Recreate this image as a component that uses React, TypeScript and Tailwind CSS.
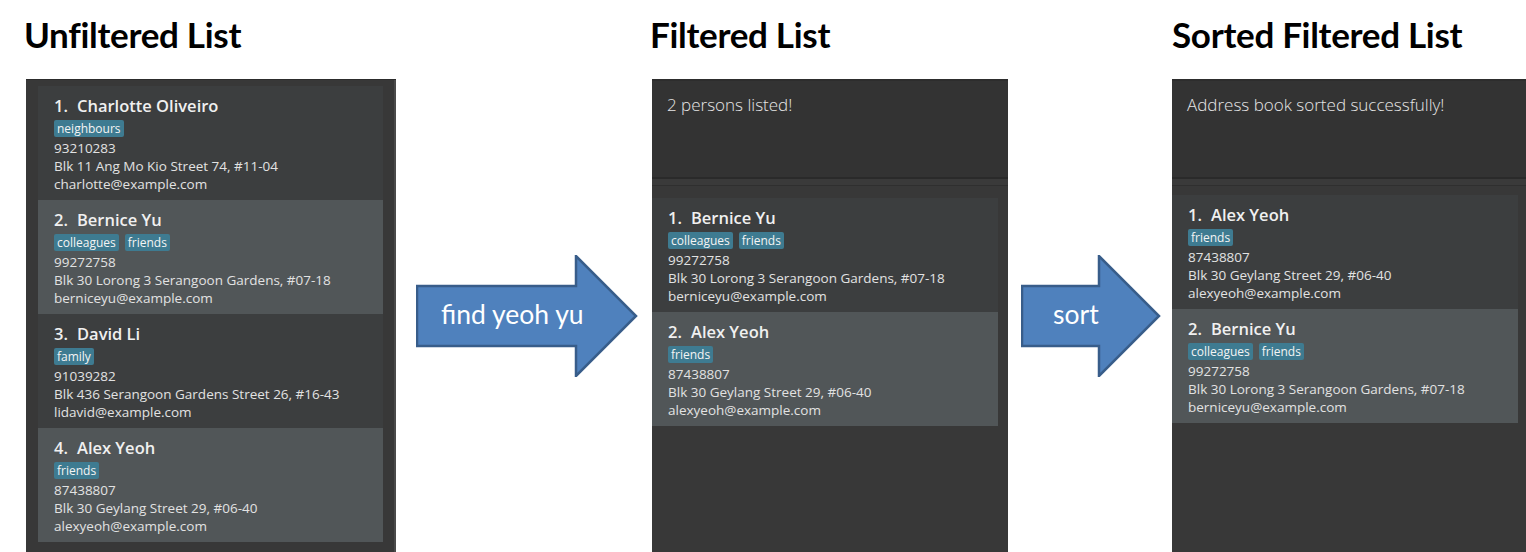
import React from "react";

type Person = {
  name: string;
  tags: string[];
  phone: string;
  address: string;
  email: string;
};

const charlotte: Person = {
  name: "Charlotte Oliveiro",
  tags: ["neighbours"],
  phone: "93210283",
  address: "Blk 11 Ang Mo Kio Street 74, #11-04",
  email: "charlotte@example.com",
};
const bernice: Person = {
  name: "Bernice Yu",
  tags: ["colleagues", "friends"],
  phone: "99272758",
  address: "Blk 30 Lorong 3 Serangoon Gardens, #07-18",
  email: "berniceyu@example.com",
};
const david: Person = {
  name: "David Li",
  tags: ["family"],
  phone: "91039282",
  address: "Blk 436 Serangoon Gardens Street 26, #16-43",
  email: "lidavid@example.com",
};
const alex: Person = {
  name: "Alex Yeoh",
  tags: ["friends"],
  phone: "87438807",
  address: "Blk 30 Geylang Street 29, #06-40",
  email: "alexyeoh@example.com",
};

const uiFont = { fontFamily: '"Open Sans", "Noto Sans", sans-serif' };
const titleFont = { fontFamily: 'Lato, "Open Sans", sans-serif' };

function Card({ p, index }: { p: Person; index: number }) {
  const light = index % 2 === 0;
  return (
    <div
      className={`h-[114px] pl-[16px] pt-[10px] ${light ? "bg-[#515658]" : "bg-[#3c3e3f]"}`}
      style={uiFont}
    >
      <div className="flex h-[20px] items-center text-[16.5px] font-semibold leading-[20px] text-[#f0f0f0]">
        <span>{index}.</span>
        <span className="ml-[9px]">{p.name}</span>
      </div>
      <div className="mt-[4px] flex h-[17px] gap-[6px]">
        {p.tags.map((t) => (
          <span
            key={t}
            className="rounded-[2px] bg-[#3e7b91] px-[3px] text-[12px] leading-[17px] text-[#f4f4f4]"
          >
            {t}
          </span>
        ))}
      </div>
      <div className="mt-[2px] text-[13.5px] leading-[18px] text-[#e2e2e2]">
        <div>{p.phone}</div>
        <div>{p.address}</div>
        <div>{p.email}</div>
      </div>
    </div>
  );
}

function Heading({ children }: { children: React.ReactNode }) {
  return (
    <div className="h-[79px] pt-[12px]">
      <div
        className="whitespace-nowrap text-[35px] font-bold leading-[44px] tracking-[-0.3px] text-black"
        style={titleFont}
      >
        {children}
      </div>
    </div>
  );
}

function ResultBox({ text }: { text: string }) {
  return (
    <div>
      <div className="h-[98px] border-t-2 border-[#2d2d2d] bg-[#333333] pl-[15px] pt-[12px]">
        <div
          className="text-[17px] font-light leading-[24px] text-[#e6e6e6]"
          style={uiFont}
        >
          {text}
        </div>
      </div>
      <div className="h-[2px] bg-[#2a2a2a]" />
      <div className="h-[6px] bg-[#3a3a3a]" />
      <div className="h-[1px] bg-[#2f2f2f]" />
    </div>
  );
}

function Arrow({
  width,
  head,
  label,
  labelLeft,
  ml,
}: {
  width: number;
  head: number;
  label: string;
  labelLeft: string;
  ml: string;
}) {
  const tip = width - 2;
  const pts = `1,31 ${head},31 ${head},1 ${tip},61 ${head},121 ${head},91 1,91`;
  return (
    <div className={`relative mt-[255px] h-[122px] shrink-0 ${ml}`} style={{ width }}>
      <svg width={width} height={122} viewBox={`0 0 ${width} 122`}>
        <polygon points={pts} fill="#4f81bd" stroke="#385d8a" strokeWidth={2.5} />
      </svg>
      <span
        className={`absolute top-[42px] whitespace-nowrap text-[26.5px] leading-[34px] text-white ${labelLeft}`}
        style={titleFont}
      >
        {label}
      </span>
    </div>
  );
}

export default function App() {
  return (
    <div className="flex h-[552px] w-[1526px] overflow-hidden bg-white">
      {/* Column 1 */}
      <div className="ml-[24px] flex w-[372px] shrink-0 flex-col">
        <Heading>Unfiltered List</Heading>
        <div className="ml-[2px] flex flex-1 border-t border-[#2c2c2c] bg-[#383838]">
          <div className="flex-1 pl-[12px] pt-[6px]">
            <Card p={charlotte} index={1} />
            <Card p={bernice} index={2} />
            <Card p={david} index={3} />
            <Card p={alex} index={4} />
          </div>
          <div className="w-[11px]" />
          <div className="w-[2px] bg-[#4a4a4a]" />
        </div>
      </div>

      <Arrow width={222} head={160} label="find yeoh yu" labelLeft="left-[25px]" ml="ml-[20px]" />

      {/* Column 2 */}
      <div className="ml-[12px] flex w-[358px] shrink-0 flex-col">
        <Heading>Filtered List</Heading>
        <div className="ml-[2px] flex flex-1 flex-col bg-[#383838]">
          <ResultBox text="2 persons listed!" />
          <div className="flex flex-1">
            <div className="w-[346px] pt-[12px]">
              <Card p={bernice} index={1} />
              <Card p={alex} index={2} />
            </div>
            <div className="flex-1" />
          </div>
        </div>
      </div>

      <Arrow width={140} head={78} label="sort" labelLeft="left-[32px]" ml="ml-[13px]" />

      {/* Column 3 */}
      <div className="ml-[11px] flex w-[354px] shrink-0 flex-col">
        <Heading>Sorted Filtered List</Heading>
        <div className="flex flex-1 flex-col bg-[#383838]">
          <ResultBox text="Address book sorted successfully!" />
          <div className="flex flex-1">
            <div className="w-[346px] pt-[9px]">
              <Card p={alex} index={1} />
              <Card p={bernice} index={2} />
            </div>
            <div className="flex-1" />
          </div>
        </div>
      </div>
    </div>
  );
}
